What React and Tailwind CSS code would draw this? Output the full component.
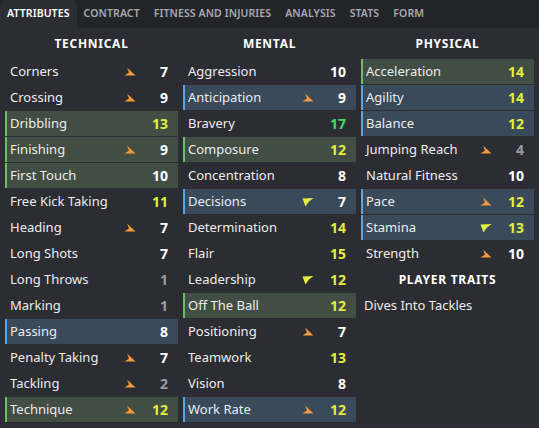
import React from "react";

const technical = [
  ["Corners", 7, "up"],
  ["Crossing", 9, "up"],
  ["Dribbling", 13, null, "green"],
  ["Finishing", 9, "up", "green"],
  ["First Touch", 10, null, "green"],
  ["Free Kick Taking", 11],
  ["Heading", 7, "up"],
  ["Long Shots", 7],
  ["Long Throws", 1],
  ["Marking", 1],
  ["Passing", 8, null, "blue"],
  ["Penalty Taking", 7, "up"],
  ["Tackling", 2, "up"],
  ["Technique", 12, "up", "green"],
];

const mental = [
  ["Aggression", 10],
  ["Anticipation", 9, "up", "blue"],
  ["Bravery", 17],
  ["Composure", 12, null, "green"],
  ["Concentration", 8],
  ["Decisions", 7, "down", "blue"],
  ["Determination", 14],
  ["Flair", 15],
  ["Leadership", 12, "down"],
  ["Off The Ball", 12, null, "green"],
  ["Positioning", 7, "up"],
  ["Teamwork", 13],
  ["Vision", 8],
  ["Work Rate", 12, "up", "blue"],
];

const physical = [
  ["Acceleration", 14, null, "green"],
  ["Agility", 14, null, "blue"],
  ["Balance", 12, null, "blue"],
  ["Jumping Reach", 4, "up"],
  ["Natural Fitness", 10],
  ["Pace", 12, "up", "blue"],
  ["Stamina", 13, "down", "blue"],
  ["Strength", 10, "up"],
];

const tabs = ["Attributes", "Contract", "Fitness and Injuries", "Analysis", "Stats", "Form"];

const valueColor = (v) => {
  if (v <= 5) return "text-[#9b9ca1]";
  if (v <= 10) return "text-white";
  if (v <= 15) return "text-[#e2ef3e]";
  return "text-[#3fe05c]";
};

// orange = rising, yellow = falling
const Arrow = ({ dir }) =>
  dir === "up" ? (
    <svg width="12" height="10" viewBox="0 0 12 10">
      <path d="M3 0.5 L11.5 8.5 L0.5 8.5 L5 5.5 Z" fill="#f39a3c" />
    </svg>
  ) : (
    <svg width="12" height="10" viewBox="0 0 12 10">
      <path d="M0.5 1.5 L11.5 1 L6.5 5 L3.5 9.5 Z" fill="#e2ef3e" />
    </svg>
  );

const Row = ({ name, value, arrow, hl }) => {
  const bg =
    hl === "green"
      ? "bg-[#424e43] border-[#6cbf6a]"
      : hl === "blue"
      ? "bg-[#3a4a5b] border-[#57a5e6]"
      : "border-transparent";
  return (
    <div className={`flex items-center h-[25px] border-l-2 pl-[3px] pr-[10px] ${bg}`}>
      <span className="flex-1 text-[13px] text-[#ececee]">{name}</span>
      <span className="w-[14px] flex items-center">{arrow && <Arrow dir={arrow} />}</span>
      <span className={`w-[30px] text-right text-[14px] font-bold ${valueColor(value)}`}>{value}</span>
    </div>
  );
};

const Header = ({ children }) => (
  <div className="h-[31px] pt-[1px] flex items-center justify-center text-[12px] font-bold tracking-[0.06em] text-white">
    {children}
  </div>
);

const Column = ({ title, rows, children }) => (
  <div className="flex flex-col">
    <Header>{title}</Header>
    <div className="flex flex-col gap-[1px]">
      {rows.map((r) => (
        <Row key={r[0]} name={r[0]} value={r[1]} arrow={r[2]} hl={r[3]} />
      ))}
    </div>
    {children}
  </div>
);

export default function App() {
  return (
    <div
      className="w-[539px] h-[428px] bg-[#2c2d32] overflow-hidden"
      style={{ fontFamily: '"Noto Sans", "Open Sans", sans-serif' }}
    >
      <div className="h-[28px] bg-[#232428] flex items-end">
        {tabs.map((t, i) => (
          <div
            key={t}
            className={`h-[28px] px-[7px] flex items-center uppercase text-[10.5px] tracking-[0.01em] font-semibold ${
              i === 0 ? "bg-[#2c2d32] rounded-t-md text-white" : "text-[#a6a9b0]"
            }`}
          >
            {t}
          </div>
        ))}
      </div>
      <div className="grid grid-cols-3 gap-[5px] px-[5px]">
        <Column title="TECHNICAL" rows={technical} />
        <Column title="MENTAL" rows={mental} />
        <Column title="PHYSICAL" rows={physical}>
          <div className="h-[27px] pt-[1px] flex items-center justify-center text-[12px] font-bold tracking-[0.06em] text-white">
            PLAYER TRAITS
          </div>
          <div className="h-[25px] flex items-center pl-[3px] text-[13px] text-[#ececee]">Dives Into Tackles</div>
        </Column>
      </div>
    </div>
  );
}
